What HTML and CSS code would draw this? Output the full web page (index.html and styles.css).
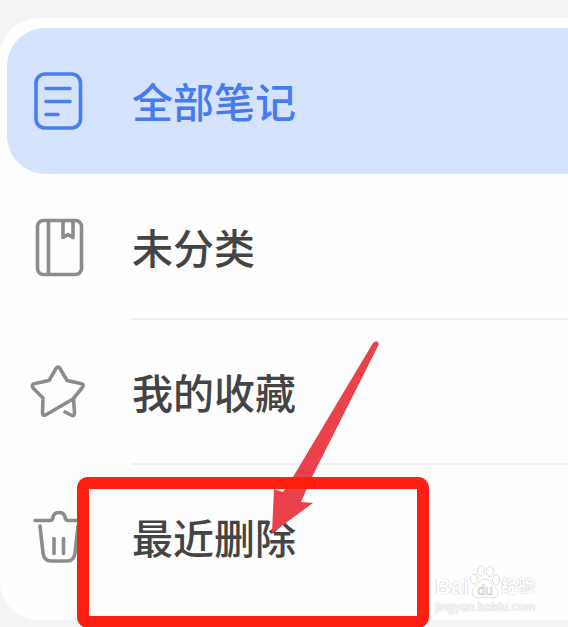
FILE: index.html
```
<!DOCTYPE html>
<html lang="zh-CN">
<head>
  <meta charset="UTF-8">
  <title>笔记</title>
  <link rel="stylesheet" href="styles.css">
</head>
<body>
  <div class="page">
    <ul class="menu">
      <li class="item on">
        <svg class="icon" viewBox="0 0 60 64" width="60" height="64">
          <rect x="8" y="5" width="44.500" height="54" rx="9"/>
          <path d="M18 19.500H42M18 32.500H42M18 45.500H30"/>
        </svg>
        <span class="name">全部笔记</span>
      </li>
      <li class="item">
        <svg class="icon" viewBox="0 0 60 64" width="60" height="64">
          <rect x="9.500" y="5.500" width="44" height="54" rx="6"/>
          <path d="M20.500 6V59M35 6V22.500L40 19.500L45 22.500V6"/>
        </svg>
        <span class="name">未分类</span>
      </li>
      <li class="item">
        <svg class="icon" viewBox="0 0 60 64" width="60" height="64">
          <path d="M37 52L44 55.500Q46.500 56 46.500 53L45.500 38.500L54 28Q57 24 52.500 23.500L39 20.500L32 8.500Q30 5.500 28 8.500L21 20.500L7 23.500Q3 24 5 28L15 38L14.500 52Q14.500 57 18.500 54.500L45 39"/>
        </svg>
        <span class="name">我的收藏</span>
      </li>
      <li class="item">
        <svg class="icon" viewBox="0 0 60 64" width="60" height="64">
          <path d="M7 15.500H22Q25 15 25 12Q26 7.500 31 7.500Q36 7.500 37 12Q37 15 40 15.500H55M12 21L15 48Q16 56 23 56H39Q46 56 47 48L50 21M26 33.500V48.500M35.500 33.500V48.500"/>
        </svg>
        <span class="name">最近删除</span>
      </li>
    </ul>
    <svg class="arrow" viewBox="0 0 110 195" width="110" height="195">
      <path d="M103 3Q107 -1 109 4L42 137L31 162L43 163L2 193L4 149L13 152L23 137Z"/>
    </svg>
    <div class="mark"></div>
    <div class="logo">
      <div class="brand">
        <span class="bai">Bai</span>
        <svg class="paw" viewBox="0 0 32 34" width="32" height="34">
          <ellipse cx="5" cy="14" rx="3.500" ry="5"/>
          <ellipse cx="12" cy="6" rx="3.500" ry="5"/>
          <ellipse cx="21" cy="6.500" rx="3.500" ry="5"/>
          <ellipse cx="27" cy="15" rx="3.500" ry="5"/>
          <path d="M16 14C11 14 10 19 6 22C1 26 3 33 9 33C14 32 18 32 23 33C29 33 31 26 26 22C22 19 21 14 16 14Z"/>
          <text x="16" y="30" text-anchor="middle">du</text>
        </svg>
        <span class="cn">经验</span>
      </div>
      <div class="site">jingyan.baidu.com</div>
    </div>
  </div>
</body>
</html>
```
FILE: styles.css
```
* {
  margin: 0;
  padding: 0;
  box-sizing: border-box;
}
body {
  background: #f3f4f6;
  font-family: "Noto Sans CJK SC", sans-serif;
}
.page {
  position: relative;
  height: 627px;
  padding-top: 18px;
  overflow: hidden;
}
.menu {
  height: 602px;
  padding: 10px 0 0 7px;
  list-style: none;
  background: #fefefe;
  border-radius: 38px 0 0 38px;
}
.item {
  display: flex;
  align-items: center;
  height: 145px;
  padding-left: 21px;
  color: #444;
}
.item.on {
  height: 146px;
  color: #467cf0;
  background: #d6e3fd;
  border-radius: 38px 0 0 38px;
}
.icon {
  flex: none;
  fill: none;
  stroke: #8c8c8c;
  stroke-width: 3.6;
  stroke-linecap: round;
  stroke-linejoin: round;
}
.on .icon {
  stroke: #4a7ff0;
}
.name {
  flex: 1;
  height: 100%;
  margin-left: 43px;
  padding-left: 1px;
  font-size: 41px;
  font-weight: 500;
  line-height: 145px;
  border-bottom: 1px solid #f0f0f0;
  box-shadow: 0 1px #f0f0f0;
}
.on .name,
.item:last-child .name {
  border-bottom: none;
  box-shadow: none;
}
/* 箭头和红框 */
.arrow {
  position: absolute;
  left: 270px;
  top: 340px;
  fill: #eb414a;
}
.mark {
  position: absolute;
  left: 77px;
  top: 477px;
  width: 352px;
  height: 151px;
  border: 12px solid #ff2012;
  border-radius: 11px;
}
/* 水印 */
.logo {
  position: absolute;
  left: 435px;
  top: 565px;
  width: 105px;
  color: #fff;
  font-family: "Liberation Sans", "Noto Sans CJK SC", sans-serif;
  text-shadow: 0 0 1px #bbb, 0 0 1px #ccc;
}
.brand {
  display: flex;
  align-items: flex-end;
  height: 34px;
  font-size: 22px;
  line-height: 24px;
}
.bai {
  font-weight: bold;
}
.paw {
  flex: none;
  fill: #fff;
  stroke: #ddd;
  stroke-width: 1;
}
.paw text {
  font-size: 14px;
  stroke: #ccc;
  stroke-width: 0.7;
  text-shadow: none;
}
.cn {
  font-size: 17px;
  font-weight: bold;
}
.site {
  font-size: 12px;
  line-height: 16px;
  letter-spacing: 0.2px;
}
```
